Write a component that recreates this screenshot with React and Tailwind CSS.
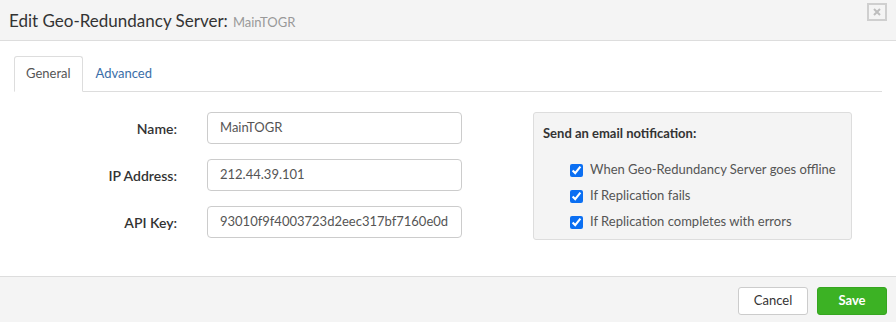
import React from "react";

export default function App() {
  const font = { fontFamily: "Lato, 'Open Sans', sans-serif" };
  return (
    <div className="w-[896px] h-[322px] bg-white flex flex-col text-[#333]" style={font}>
      <div className="h-[41px] bg-[#f4f4f4] border-b border-[#dddddd] flex items-start justify-between pl-[9px] pr-[9px]">
        <div className="mt-[8px] flex items-baseline">
          <span className="text-[17px] text-[#333]">Edit Geo-Redundancy Server:</span>
          <span className="ml-[5px] text-[13px] text-[#999]">MainTOGR</span>
        </div>
        <div className="mt-[3px] w-[20px] h-[18px] border-2 border-[#cfcfcf] flex items-center justify-center">
          <svg width="8" height="8" viewBox="0 0 8 8">
            <path d="M1 1 L7 7 M7 1 L1 7" stroke="#bdbdbd" strokeWidth="2" />
          </svg>
        </div>
      </div>
      <div className="flex-1 px-[14px] pt-[15px]">
        <div className="flex border-b border-[#dddddd] h-[36px]">
          <div className="h-[36px] px-[11px] border border-[#dddddd] border-b-white rounded-t-[3px] bg-white flex items-center text-[13px] text-[#555]">General</div>
          <div className="h-[35px] px-[13px] flex items-center text-[13px] text-[#3a6ea8]">Advanced</div>
        </div>
        <div className="flex pt-[20px]">
          <div className="flex flex-col gap-[15px]">
            {[
              ["Name:", "MainTOGR"],
              ["IP Address:", "212.44.39.101"],
              ["API Key:", "93010f9f4003723d2eec317bf7160e0d"],
            ].map(([l, v]) => (
              <div key={l} className="flex items-center">
                <div className="w-[163px] text-right text-[14px] font-semibold text-[#333]">{l}</div>
                <div className="ml-[30px] w-[255px] h-[32px] border border-[#cccccc] rounded-[4px] flex items-center px-[12px] text-[13px] text-[#555] overflow-hidden whitespace-nowrap">{v}</div>
              </div>
            ))}
          </div>
          <div className="ml-[71px] w-[319px] h-[128px] bg-[#f4f4f4] border border-[#dddddd] rounded-[3px] pl-[9px] pt-[11px]">
            <div className="text-[13px] font-bold text-[#333]">Send an email notification:</div>
            <div className="mt-[18px] ml-[27px] flex flex-col gap-[9px]">
              {[
                "When Geo-Redundancy Server goes offline",
                "If Replication fails",
                "If Replication completes with errors",
              ].map((t) => (
                <label key={t} className="flex items-center h-[17px] text-[13px] text-[#555] whitespace-nowrap">
                  <input type="checkbox" defaultChecked className="w-[13px] h-[13px] m-0 accent-[#0b6ff2]" />
                  <span className="ml-[7px]">{t}</span>
                </label>
              ))}
            </div>
          </div>
        </div>
      </div>
      <div className="h-[46px] bg-[#f4f4f4] border-t border-[#dddddd] flex items-start justify-end pr-[9px] pt-[10px] gap-[9px]">
        <button className="w-[70px] h-[28px] bg-white border border-[#cccccc] rounded-[3px] text-[13px] text-[#333]">Cancel</button>
        <button className="w-[70px] h-[28px] bg-[#3cb224] border border-[#36a620] rounded-[3px] text-[13px] font-bold text-white">Save</button>
      </div>
    </div>
  );
}
